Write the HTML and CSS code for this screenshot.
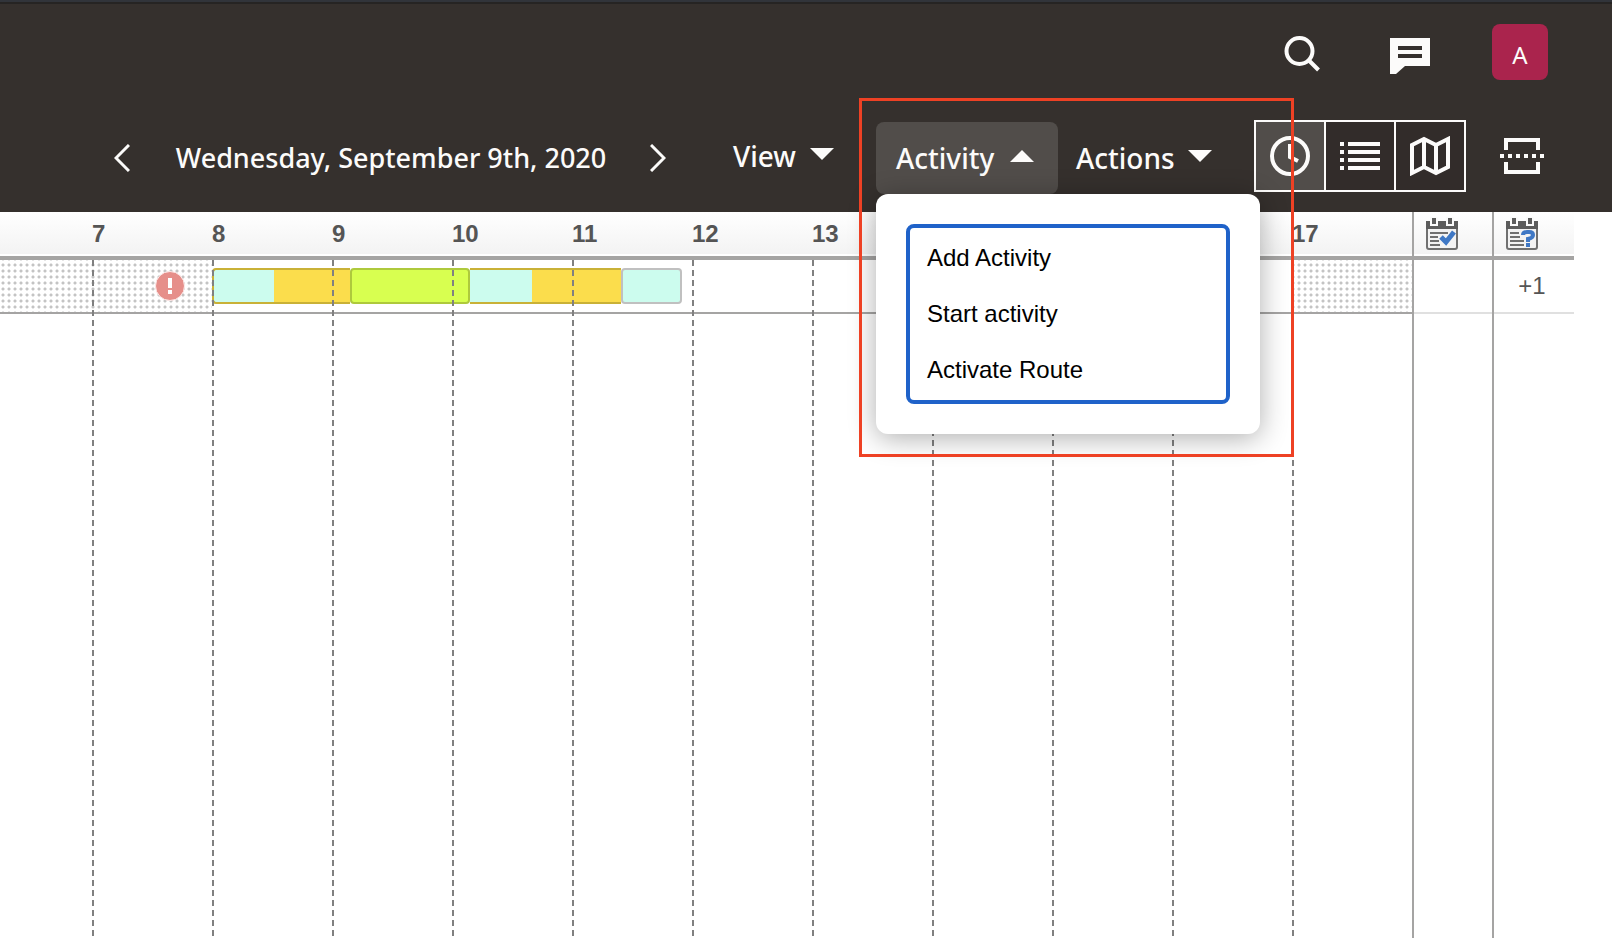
FILE: index.html
```html
<!DOCTYPE html>
<html lang="en">
<head>
<meta charset="utf-8">
<title>Dispatch console</title>
<link rel="stylesheet" href="styles.css">
</head>
<body>
<header class="header">
  <div class="topbar">
    <button class="icon-button" aria-label="Search">
      <svg width="40" height="40" viewBox="0 0 40 40" fill="none" stroke="#fcfbfa" stroke-width="4"><circle cx="17.500" cy="17" r="13"/><path d="M27 26.500 36.500 36"/></svg>
    </button>
    <button class="icon-button" aria-label="Messages">
      <svg width="40" height="40" viewBox="0 0 40 40"><path fill="#fcfbfa" fill-rule="evenodd" d="M0 4H40V32H15L6 40H0ZM8 12V16H32V12ZM8 20V24H32V20Z"/></svg>
    </button>
    <button class="avatar">A</button>
  </div>
  <div class="toolbar">
    <nav class="date-nav" aria-label="Date">
      <button class="step" aria-label="Previous day"><svg width="16" height="28" viewBox="0 0 16 28" fill="none" stroke="#fcfbfa" stroke-width="3"><path d="M15 1 2 14 15 27"/></svg></button>
      <span class="date">Wednesday, September 9th, 2020</span>
      <button class="step" aria-label="Next day"><svg width="16" height="28" viewBox="0 0 16 28" fill="none" stroke="#fcfbfa" stroke-width="3"><path d="M1 1 14 14 1 27"/></svg></button>
    </nav>
    <button class="menu-button view-button">View <svg width="24" height="12" viewBox="0 0 24 12"><path fill="#fcfbfa" d="M0 0H24L12 12Z"/></svg></button>
    <div class="menus">
      <div class="dropdown">
        <button class="menu-button open" aria-expanded="true">Activity <svg width="24" height="12" viewBox="0 0 24 12"><path fill="#fcfbfa" d="M0 12H24L12 0Z"/></svg></button>
        <div class="menu">
          <div class="menu-list">
            <button class="menu-item">Add Activity</button>
            <button class="menu-item">Start activity</button>
            <button class="menu-item">Activate Route</button>
          </div>
        </div>
        <div class="highlight"></div>
      </div>
      <button class="menu-button actions-button">Actions <svg width="24" height="12" viewBox="0 0 24 12"><path fill="#fcfbfa" d="M0 0H24L12 12Z"/></svg></button>
    </div>
    <div class="view-switch">
      <button class="switch selected" aria-label="Time view"><svg width="40" height="40" viewBox="0 0 40 40" fill="none" stroke="#fcfbfa" stroke-width="4"><circle cx="20" cy="20" r="18"/><path d="M20 8V21L28 25"/></svg></button>
      <button class="switch" aria-label="List view"><svg width="40" height="40" viewBox="0 0 40 40"><path fill="#fcfbfa" d="M0 6h4v4H0zM8 6h32v4H8zM0 14h4v4H0zM8 14h32v4H8zM0 22h4v4H0zM8 22h32v4H8zM0 30h4v4H0zM8 30h32v4H8z"/></svg></button>
      <button class="switch" aria-label="Map view"><svg width="40" height="40" viewBox="0 0 40 40" fill="none" stroke="#fcfbfa" stroke-width="4"><path d="M2 9 14 3 26 9 38 3V31L26 37 14 31 2 37ZM14 3V31M26 9V37"/></svg></button>
    </div>
    <button class="split" aria-label="Split view"><svg width="44" height="36" viewBox="0 0 44 36"><path fill="#fcfbfa" d="M4 0H40V12H36V4H8V12H4ZM4 24H8V32H36V24H40V36H4ZM0 16h4v4H0zM8 16h4v4H8zM16 16h4v4h-4zM24 16h4v4h-4zM32 16h4v4h-4zM40 16h4v4h-4z"/></svg></button>
  </div>
</header>
<main class="timeline">
  <section class="hours">
    <div class="hour-head">
      <span></span><span>7</span><span>8</span><span>9</span><span>10</span><span>11</span><span>12</span><span>13</span><span>14</span><span>15</span><span>16</span><span>17</span>
    </div>
    <div class="chart">
      <div class="lane">
        <div class="off-hours"><svg class="alert" width="30" height="30" viewBox="0 0 30 30"><circle cx="15" cy="15" r="14.500" fill="#e68f8a" stroke="#fbeae9"/><path fill="#fff" d="M13 7h4v10h-4zM13 19h4v4h-4z"/></svg></div>
        <div class="bar travel first"></div>
        <div class="bar started"></div>
        <div class="bar travel second"></div>
        <div class="bar pending"></div>
        <div></div>
        <div class="off-hours"></div>
      </div>
      <div class="hour-lines"><i></i><i></i><i></i><i></i><i></i><i></i><i></i><i></i><i></i><i></i><i></i><i></i></div>
    </div>
  </section>
  <section class="side">
    <div class="side-head"><svg width="32" height="34" viewBox="0 0 32 34"><rect x="1" y="6" width="30" height="26" rx="2" fill="#f3f3f3" stroke="#707070" stroke-width="2"/><path fill="#5c5c5c" d="M0 4H32V12H0z"/><path fill="#5c5c5c" stroke="#fafafa" stroke-width="2" d="M5 0h6v8H5zM21 0h6v8h-6z"/><path stroke="#707070" stroke-width="2" d="M4 16H22M4 20H12M4 24H13M4 28H14"/><path fill="none" stroke="#3f78c5" stroke-width="5" d="M15 20 20 25 28 15"/></svg></div>
    <div class="side-cell"></div>
  </section>
  <section class="side last">
    <div class="side-head"><svg width="32" height="34" viewBox="0 0 32 34"><rect x="1" y="6" width="30" height="26" rx="2" fill="#f3f3f3" stroke="#707070" stroke-width="2"/><path fill="#5c5c5c" d="M0 4H32V12H0z"/><path fill="#5c5c5c" stroke="#fafafa" stroke-width="2" d="M5 0h6v8H5zM21 0h6v8h-6z"/><path stroke="#707070" stroke-width="2" d="M4 16H13M4 20H14M4 24H18M4 28H18"/><path fill="none" stroke="#3f78c5" stroke-width="4" d="M17 18Q17 15 21 15H23Q27 15 27 18T22 22V25M20 28H24"/></svg></div>
    <div class="side-cell">+1</div>
  </section>
</main>
</body>
</html>
```
FILE: styles.css
```css
* { box-sizing: border-box; }
body {
  margin: 0;
  min-height: 100vh;
  display: flex;
  flex-direction: column;
  background: #fff;
  font-family: "Liberation Sans", Arial, sans-serif;
  font-size: 24px;
}
button {
  margin: 0;
  padding: 0;
  border: 0;
  background: none;
  color: inherit;
  font: inherit;
}
svg { display: block; flex: none; }

.header {
  background: linear-gradient(#31343a 0 2px, #262423 2px 4px, #35302d 4px);
  color: #fcfbfa;
  padding: 24px 64px 20px 0;
  font-family: "Noto Sans", "Open Sans", sans-serif;
}
.topbar {
  display: flex;
  justify-content: flex-end;
  align-items: center;
  gap: 62px;
  height: 56px;
}
.icon-button { padding: 4px 0 0; }
.icon-button:first-child { padding-right: 6px; }
.avatar {
  width: 56px;
  height: 56px;
  padding-top: 4px;
  border-radius: 8px;
  background: #aa244d;
}
.toolbar {
  display: flex;
  justify-content: flex-end;
  height: 72px;
  margin-top: 40px;
  font-size: 28px;
  font-weight: 500;
}
.date-nav {
  display: flex;
  align-items: center;
  margin-right: 35px;
  padding-top: 4px;
}
.step { display: flex; justify-content: center; width: 40px; }
.date {
  width: 496px;
  padding: 0 0 2px 2px;
  font-size: 27px;
  text-align: center;
  white-space: nowrap;
}
.menu-button {
  display: flex;
  align-items: center;
  justify-content: space-between;
  height: 72px;
  padding: 0 24px 0 20px;
  border-radius: 8px;
}
.menu-button svg { margin-bottom: 4px; }
.view-button { width: 145px; margin-right: 18px; }
.menus { display: flex; padding-top: 2px; margin-right: 24px; }
.dropdown { position: relative; }
.open { width: 182px; background: #514d4a; }
.actions-button { width: 172px; padding: 0 18px; }
.menu {
  position: absolute;
  z-index: 2;
  top: 72px;
  left: 0;
  width: 384px;
  padding: 30px;
  border-radius: 12px;
  background: #fff;
  box-shadow: 0 4px 28px rgba(0, 0, 0, 0.32);
}
.menu-list {
  display: flex;
  flex-direction: column;
  padding: 2px 0;
  border: 4px solid #1f62c9;
  border-radius: 8px;
}
.menu-item {
  height: 56px;
  padding: 0 17px;
  color: #000;
  font: 24px "Liberation Sans", Arial, sans-serif;
  text-align: left;
}
.highlight {
  position: absolute;
  z-index: 3;
  top: -24px;
  left: -17px;
  width: 435px;
  height: 359px;
  border: 3px solid #ee4124;
  pointer-events: none;
}
.view-switch {
  display: flex;
  gap: 2px;
  padding: 2px;
  background: #fcfbfa;
}
.switch {
  display: flex;
  align-items: center;
  justify-content: center;
  width: 68px;
  background: #322c2a;
}
.selected { background: #514d4a; }
.split {
  display: flex;
  align-items: center;
  justify-content: center;
  width: 52px;
  margin-left: 30px;
}

.timeline {
  flex: 1;
  display: flex;
  padding-right: 38px;
  color: #555;
}
.hours { flex: 1; display: flex; flex-direction: column; min-width: 0; }
.hour-head, .hour-lines {
  display: grid;
  grid-template-columns: 92fr repeat(11, 120fr);
}
.hour-head, .side-head {
  height: 48px;
  border-bottom: 4px solid #a5a4a3;
  background: linear-gradient(#fff, #f3f3f3 42px, #fff 42px);
}
.hour-head { font-weight: 700; line-height: 44px; }
.chart { flex: 1; display: grid; grid-template-rows: 54px 1fr; }
.lane {
  grid-area: 1 / 1;
  display: grid;
  grid-template-columns: 212fr 138fr 120fr 151fr 61fr 610fr 120fr;
  border-bottom: 2px solid #a5a4a3;
}
.off-hours {
  display: flex;
  align-items: center;
  justify-content: flex-end;
  padding-right: 27px;
  background: radial-gradient(circle at 3px 3px, #c4c4c4 1px, #fff 2px) 0 2px / 6px 6px;
}
.off-hours:last-child { background-position: 4px 2px; }
.bar { height: 36px; margin-top: 8px; border: 2px solid #c9b137; }
.travel { border-radius: 4px 0 0 4px; }
.first { background: linear-gradient(90deg, #ccfcee 44%, #fbdd4c 44%); border-right: 0; }
.second { border-width: 2px 0; border-radius: 0; background: linear-gradient(90deg, #ccfcee 41%, #fbdd4c 41%); }
.started { border-color: #aec93c; border-radius: 4px; background: #d8ff50; }
.pending { border-color: #c0c0c0; border-radius: 4px; background: #ccfcee; }
.hour-lines { grid-area: 1 / 1 / 3 / 2; z-index: 1; }
.hour-lines i {
  background: repeating-linear-gradient(#808080 0 6px, transparent 6px 10px) 0 0 / 2px 100% no-repeat;
}
.hour-lines i:first-child { background: none; }
.side { width: 80px; border-left: 2px solid #a5a4a3; }
.last { width: 82px; }
.side-head { padding: 5px 0 0 12px; }
.side-cell {
  height: 54px;
  padding-right: 4px;
  border-bottom: 2px solid #e0e0e0;
  line-height: 52px;
  text-align: center;
}
```
